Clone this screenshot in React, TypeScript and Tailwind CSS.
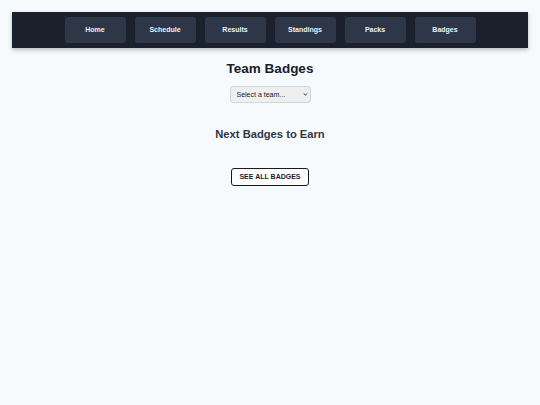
import React from 'react';

const navItems = ["Home", "Schedule", "Results", "Standings", "Packs", "Badges"];

const NavBar = () => (
    <nav className="mx-3 h-[36px] bg-[#1a202c] shadow-[0_2px_4px_rgba(0,0,0,0.25)] flex items-center justify-center gap-[9px]">
        {navItems.map((item) => (
            <button
                key={item}
                className="w-[61px] h-[26px] rounded-[3px] bg-[#2d3748] text-[#edf2f7] text-[7px] font-bold"
            >
                {item}
            </button>
        ))}
    </nav>
);

export default function App() {
    return <div className="min-h-[405px] bg-[#f7fafc] pt-3 font-['Liberation_Sans',Arial,sans-serif]">
        <NavBar />
        <main className="flex flex-col items-center">
            <h1 className="mt-[12px] text-[13.5px] leading-[18px] font-bold text-[#1a202c]">Team Badges</h1>
            <div className="relative mt-[8px] flex h-[17px]">
                <select className="block appearance-none w-[81px] h-[17px] rounded-[3px] border border-[#d4d4d4] bg-[#efefef] pl-[6px] text-[7px] leading-[15px] text-[#222] outline-none">
                    <option>Select a team...</option>
                </select>
                <svg className="absolute right-[3px] top-[6px] w-[5px] h-[5px] pointer-events-none" viewBox="0 0 10 10">
                    <path d="M2 3 L5 6.5 L8 3" fill="none" stroke="#333" strokeWidth="2" />
                </svg>
            </div>
            <h2 className="mt-[23px] text-[11.2px] leading-[16px] font-bold text-[#2d3748]">Next Badges to Earn</h2>
            <button className="mt-[26px] w-[78px] h-[18px] rounded-[3px] border-[1.5px] border-[#1a1a1a] bg-white text-[7px] font-bold text-[#1a202c] uppercase">
                See All Badges
            </button>
        </main>
    </div>
};
